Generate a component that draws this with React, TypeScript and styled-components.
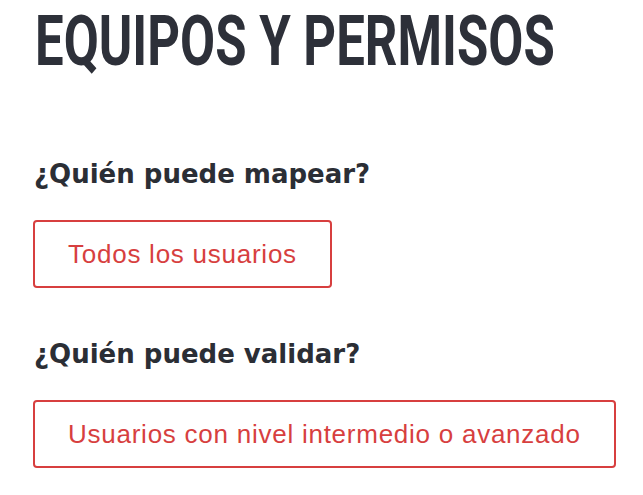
import React, { useLayoutEffect, useRef, useState } from "react";
import styled, { createGlobalStyle } from "styled-components";

const GlobalStyle = createGlobalStyle`
  html, body { margin: 0; padding: 0; background: #ffffff; }
  body { font-family: "Liberation Sans", Arial, sans-serif; }
`;

const Page = styled.main`
  display: flex;
  flex-direction: column;
  padding: 0 0 0 33px;
`;

const Title = styled.h1`
  display: block;
  margin: 5px 0 82px 2px;
  font-family: Roboto, "Liberation Sans", sans-serif;
  font-weight: 700;
  font-size: 71px;
  line-height: 71px;
  color: #2d3039;
  white-space: nowrap;
  transform-origin: 0 0;
`;

const Sections = styled.div`
  display: flex;
  flex-direction: column;
  gap: 50px;
`;

const Section = styled.section`
  display: flex;
  flex-direction: column;
  align-items: flex-start;
  gap: 30px;
`;

const Heading = styled.h2`
  margin: 0 0 0 1px;
  font-family: "DejaVu Sans", "Liberation Sans", sans-serif;
  font-weight: 700;
  font-size: 26px;
  line-height: 32px;
  color: #2b2e35;
`;

const Option = styled.button`
  display: inline-flex;
  align-items: center;
  margin: 0;
  padding: 17px 33px;
  border: 2px solid #d73f3f;
  border-radius: 4px;
  background: #ffffff;
  color: #d73f3f;
  font-family: "Liberation Sans", Arial, sans-serif;
  font-size: 26px;
  line-height: 30px;
  letter-spacing: 0.75px;
  cursor: pointer;
`;

const TITLE_WIDTH = 520;

function FittedTitle({ children }: { children: string }) {
  const ref = useRef<HTMLHeadingElement>(null);
  const [scale, setScale] = useState(0.6);
  useLayoutEffect(() => {
    const el = ref.current;
    if (!el) return;
    const w = el.scrollWidth;
    if (w > 0) setScale(TITLE_WIDTH / w);
  }, [children]);
  return (
    <Title ref={ref} style={{ transform: `scaleX(${scale})` }}>
      {children}
    </Title>
  );
}

export default function App() {
  return (
    <>
      <GlobalStyle />
      <Page>
        <FittedTitle>EQUIPOS Y PERMISOS</FittedTitle>
        <Sections>
          <Section>
            <Heading>¿Quién puede mapear?</Heading>
            <Option type="button">Todos los usuarios</Option>
          </Section>
          <Section>
            <Heading>¿Quién puede validar?</Heading>
            <Option type="button">Usuarios con nivel intermedio o avanzado</Option>
          </Section>
        </Sections>
      </Page>
    </>
  );
}
